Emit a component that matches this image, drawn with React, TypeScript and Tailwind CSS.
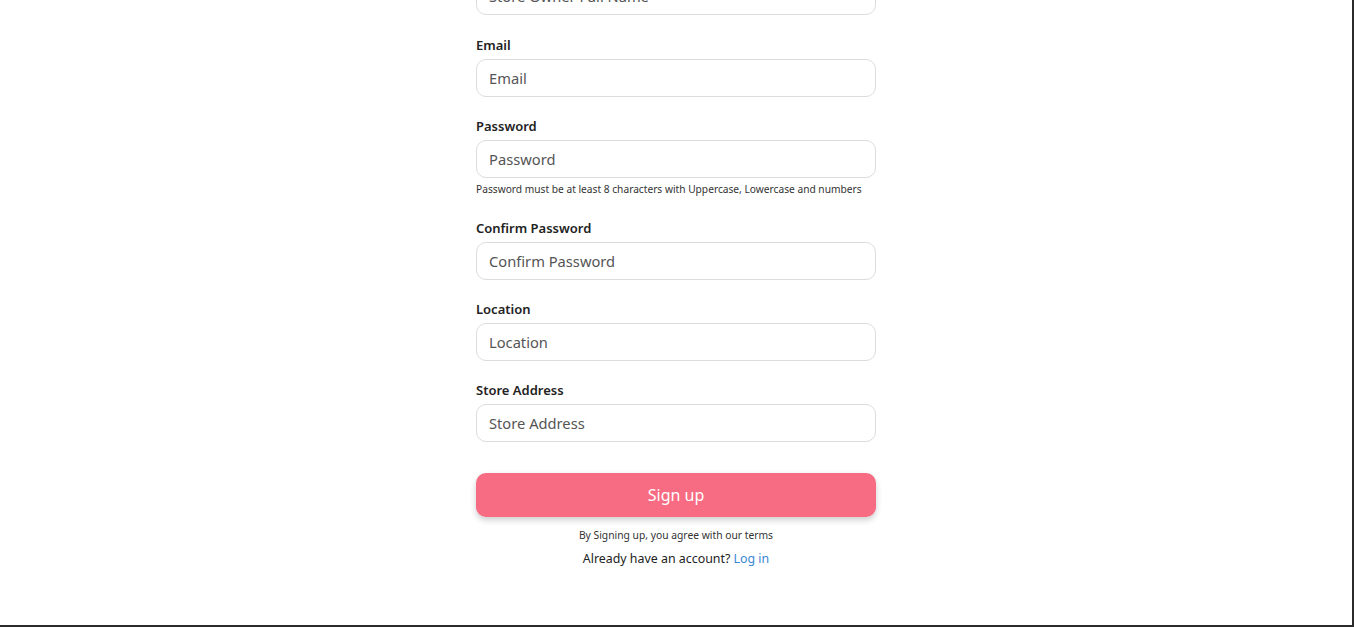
const fields = [
  { label: "Email", placeholder: "Email" },
  {
    label: "Password",
    placeholder: "Password",
    hint: "Password must be at least 8 characters with Uppercase, Lowercase and numbers",
  },
  { label: "Confirm Password", placeholder: "Confirm Password" },
  { label: "Location", placeholder: "Location" },
  { label: "Store Address", placeholder: "Store Address" },
];

function Field({ label, placeholder, hint }: { label: string; placeholder: string; hint?: string }) {
  return (
    <div className="flex flex-col">
      <label className="text-[13px] leading-[18px] font-semibold text-[#222]">{label}</label>
      <input
        placeholder={placeholder}
        className="mt-[5px] h-[38px] w-full rounded-[10px] border border-[#dcdcdc] px-3 text-[14.7px] text-[#444] placeholder:text-[#555] outline-none"
      />
      {hint && <p className="mt-[5px] mb-[4px] text-[10.2px] leading-[12px] text-[#333]">{hint}</p>}
    </div>
  );
}

export default function App() {
  return (
    <div
      className="h-[627px] w-full overflow-hidden border-r-2 border-b-2 border-[#2b2b2b] bg-white"
      style={{ fontFamily: '"Noto Sans", sans-serif' }}
    >
      <div className="mx-auto flex w-[400px] flex-col">
        <input
          placeholder="Store Owner Full Name"
          className="-mt-[23px] h-[38px] w-full rounded-[10px] border border-[#dcdcdc] px-3 text-[14.7px] placeholder:text-[#555] outline-none"
        />
        <div className="mt-[21px] flex flex-col gap-5">
          {fields.map((f) => (
            <Field key={f.label} {...f} />
          ))}
        </div>
        <button className="mt-[31px] h-[44px] w-full rounded-[10px] bg-[#f76c82] text-[16px] text-white shadow-[0_3px_6px_rgba(0,0,0,0.2)]">
          Sign up
        </button>
        <p className="mt-[11px] text-center text-[10.3px] leading-[14px] text-[#333]">
          By Signing up, you agree with our terms
        </p>
        <p className="mt-[8px] text-center text-[12.4px] leading-[18px] text-[#222]">
          Already have an account? <a className="text-[#3a87d6]">Log in</a>
        </p>
      </div>
    </div>
  );
}
